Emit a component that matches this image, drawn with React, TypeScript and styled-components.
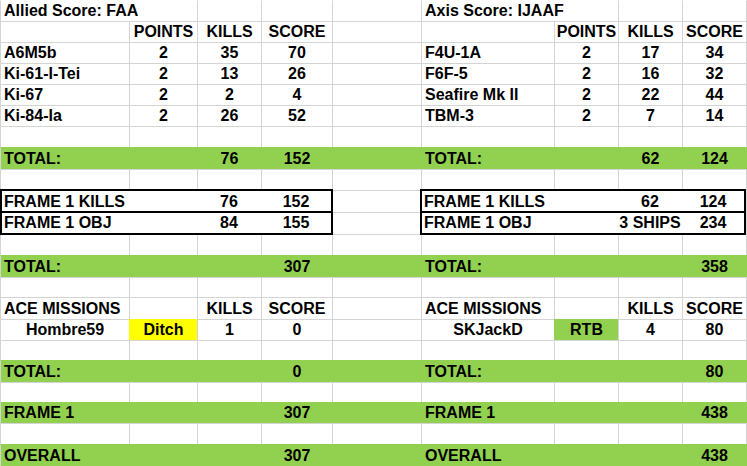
import React from 'react'
import styled, { createGlobalStyle } from 'styled-components'

// __________
//
const GRID = '#d4d4d4'
const GREEN = '#92d050'
const YELLOW = '#ffff00'
const COLS = [129, 68, 64, 71, 89, 133, 64, 64, 64, 1].map((w) => `${w}px`).join(' ')

type Align = 'left' | 'center'
type CellData = { text?: string; align?: Align; span?: number; fill?: string }
type FrameData = { cols: string; cells: CellData[] }
type RowData = {
  h: number
  kind?: 'plain' | 'band' | 'frame'
  noTop?: boolean
  edge?: 'top' | 'bottom'
  cells?: CellData[]
  frames?: [FrameData, FrameData]
}

const L = (text: string, span = 1): CellData => ({ text, align: 'left', span })
const C = (text: string, fill?: string): CellData => ({ text, align: 'center', fill })
const E: CellData = {}
const empty = (): CellData[] => Array.from({ length: 9 }, () => E)

const side = (label: string, a: string, b: string, c: string): CellData[] => [
  L(label),
  a ? C(a) : E,
  b ? C(b) : E,
  c ? C(c) : E,
]

const frame = (left: string[], right: string[]): [FrameData, FrameData] => [
  { cols: '127px 68px 64px 70px', cells: side(left[0], left[1], left[2], left[3]) },
  { cols: '132px 64px 64px 62px', cells: side(right[0], right[1], right[2], right[3]) },
]

const rows: RowData[] = [
  { h: 21, noTop: true, cells: [L('Allied Score: FAA', 2), E, E, E, L('Axis Score: IJAAF', 2), E, E] },
  { h: 21, cells: [E, C('POINTS'), C('KILLS'), C('SCORE'), E, E, C('POINTS'), C('KILLS'), C('SCORE')] },
  { h: 21, cells: [...side('A6M5b', '2', '35', '70'), E, ...side('F4U-1A', '2', '17', '34')] },
  { h: 21, cells: [...side('Ki-61-I-Tei', '2', '13', '26'), E, ...side('F6F-5', '2', '16', '32')] },
  { h: 21, cells: [...side('Ki-67', '2', '2', '4'), E, ...side('Seafire Mk II', '2', '22', '44')] },
  { h: 21, cells: [...side('Ki-84-Ia', '2', '26', '52'), E, ...side('TBM-3', '2', '7', '14')] },
  { h: 21, cells: empty() },
  { h: 22, kind: 'band', cells: [...side('TOTAL:', '', '76', '152'), E, ...side('TOTAL:', '', '62', '124')] },
  { h: 21, cells: empty() },
  { h: 22, kind: 'frame', edge: 'top', frames: frame(['FRAME 1 KILLS', '', '76', '152'], ['FRAME 1 KILLS', '', '62', '124']) },
  { h: 22, kind: 'frame', edge: 'bottom', frames: frame(['FRAME 1 OBJ', '', '84', '155'], ['FRAME 1 OBJ', '', '3 SHIPS', '234']) },
  { h: 21, cells: empty() },
  { h: 22, kind: 'band', cells: [...side('TOTAL:', '', '', '307'), E, ...side('TOTAL:', '', '', '358')] },
  { h: 20, cells: empty() },
  { h: 22, cells: [...side('ACE MISSIONS', '', 'KILLS', 'SCORE'), E, ...side('ACE MISSIONS', '', 'KILLS', 'SCORE')] },
  { h: 21, cells: [C('Hombre59'), C('Ditch', YELLOW), C('1'), C('0'), E, C('SKJackD'), C('RTB', GREEN), C('4'), C('80')] },
  { h: 20, cells: empty() },
  { h: 22, kind: 'band', cells: [...side('TOTAL:', '', '', '0'), E, ...side('TOTAL:', '', '', '80')] },
  { h: 20, cells: empty() },
  { h: 21, kind: 'band', cells: [...side('FRAME 1', '', '', '307'), E, ...side('FRAME 1', '', '', '438')] },
  { h: 21, cells: empty() },
  { h: 22, kind: 'band', cells: [...side('OVERALL', '', '', '307'), E, ...side('OVERALL', '', '', '438')] },
]

// __________
//
const FrameBlock: React.FC<{ data: FrameData; edge: 'top' | 'bottom'; shift: number }> = ({
  data,
  edge,
  shift,
}) => (
  <Frame $cols={data.cols} $edge={edge} $shift={shift}>
    {data.cells.map((c, j) => (
      <FrameCell key={j} $align={c.align ?? 'left'}>
        {c.text}
      </FrameCell>
    ))}
  </Frame>
)

const ScoreSheet: React.FC = () => (
  <>
    <GlobalStyle />
    <Sheet>
      {rows.map((row, i) => (
        <Row key={i} $h={row.h} $band={row.kind === 'band'} $noTop={!!row.noTop}>
          {row.kind === 'frame' && row.frames ? (
            <>
              <FrameBlock data={row.frames[0]} edge={row.edge!} shift={0} />
              <Cell $align="left" />
              <FrameBlock data={row.frames[1]} edge={row.edge!} shift={-1} />
              <Cell $align="left" />
            </>
          ) : (
            <>
              {row.cells!.map((c, j) => (
                <Cell key={j} $align={c.align ?? 'left'} $span={c.span ?? 1} $fill={c.fill}>
                  {c.text}
                </Cell>
              ))}
              <Cell $align="left" />
            </>
          )}
        </Row>
      ))}
    </Sheet>
  </>
)

// __________
//
const GlobalStyle = createGlobalStyle`
  html, body {
    margin: 0;
    padding: 0;
    background: #fff;
  }
  body {
    font-family: 'Liberation Sans', Arial, sans-serif;
    font-weight: bold;
    font-size: 16px;
    color: #000;
  }
`

const Sheet = styled.div`
  display: flex;
  flex-direction: column;
  width: 747px;
  height: 466px;
  overflow: hidden;
`

const Cell = styled.div<{ $align: Align; $span?: number; $fill?: string }>`
  grid-column: span ${(p) => p.$span ?? 1};
  display: flex;
  align-items: center;
  justify-content: ${(p) => (p.$align === 'center' ? 'center' : 'flex-start')};
  padding-left: ${(p) => (p.$align === 'center' ? 0 : 3)}px;
  border-left: 1px solid ${(p) => (p.$fill ? 'transparent' : GRID)};
  border-top: 1px solid ${(p) => (p.$fill ? 'transparent' : GRID)};
  background: ${(p) => p.$fill ?? 'transparent'};
  white-space: nowrap;
  min-width: 0;
`

const Row = styled.div<{ $h: number; $band: boolean; $noTop: boolean }>`
  display: grid;
  grid-template-columns: ${COLS};
  height: ${(p) => p.$h}px;
  flex: none;
  background: ${(p) => (p.$band ? GREEN : 'transparent')};

  & > ${Cell} {
    ${(p) => (p.$noTop || p.$band ? 'border-top-color: transparent;' : '')}
  }
  & > ${Cell}:not(:first-child) {
    ${(p) => (p.$band ? 'border-left-color: transparent;' : '')}
  }
`

const Frame = styled.div<{ $cols: string; $edge: 'top' | 'bottom'; $shift: number }>`
  grid-column: span 4;
  position: relative;
  z-index: 1;
  display: grid;
  grid-template-columns: ${(p) => p.$cols};
  margin: -1px ${(p) => (p.$shift === 0 ? -1 : 0)}px ${(p) => (p.$edge === 'bottom' ? -1 : 0)}px
    ${(p) => p.$shift}px;
  border: 2px solid #000;
  ${(p) => (p.$edge === 'top' ? 'border-bottom: none;' : '')}
  background: #fff;
`

const FrameCell = styled.div<{ $align: Align }>`
  display: flex;
  align-items: center;
  justify-content: ${(p) => (p.$align === 'center' ? 'center' : 'flex-start')};
  padding-left: ${(p) => (p.$align === 'center' ? 0 : 2)}px;
  white-space: nowrap;
`

export default ScoreSheet
